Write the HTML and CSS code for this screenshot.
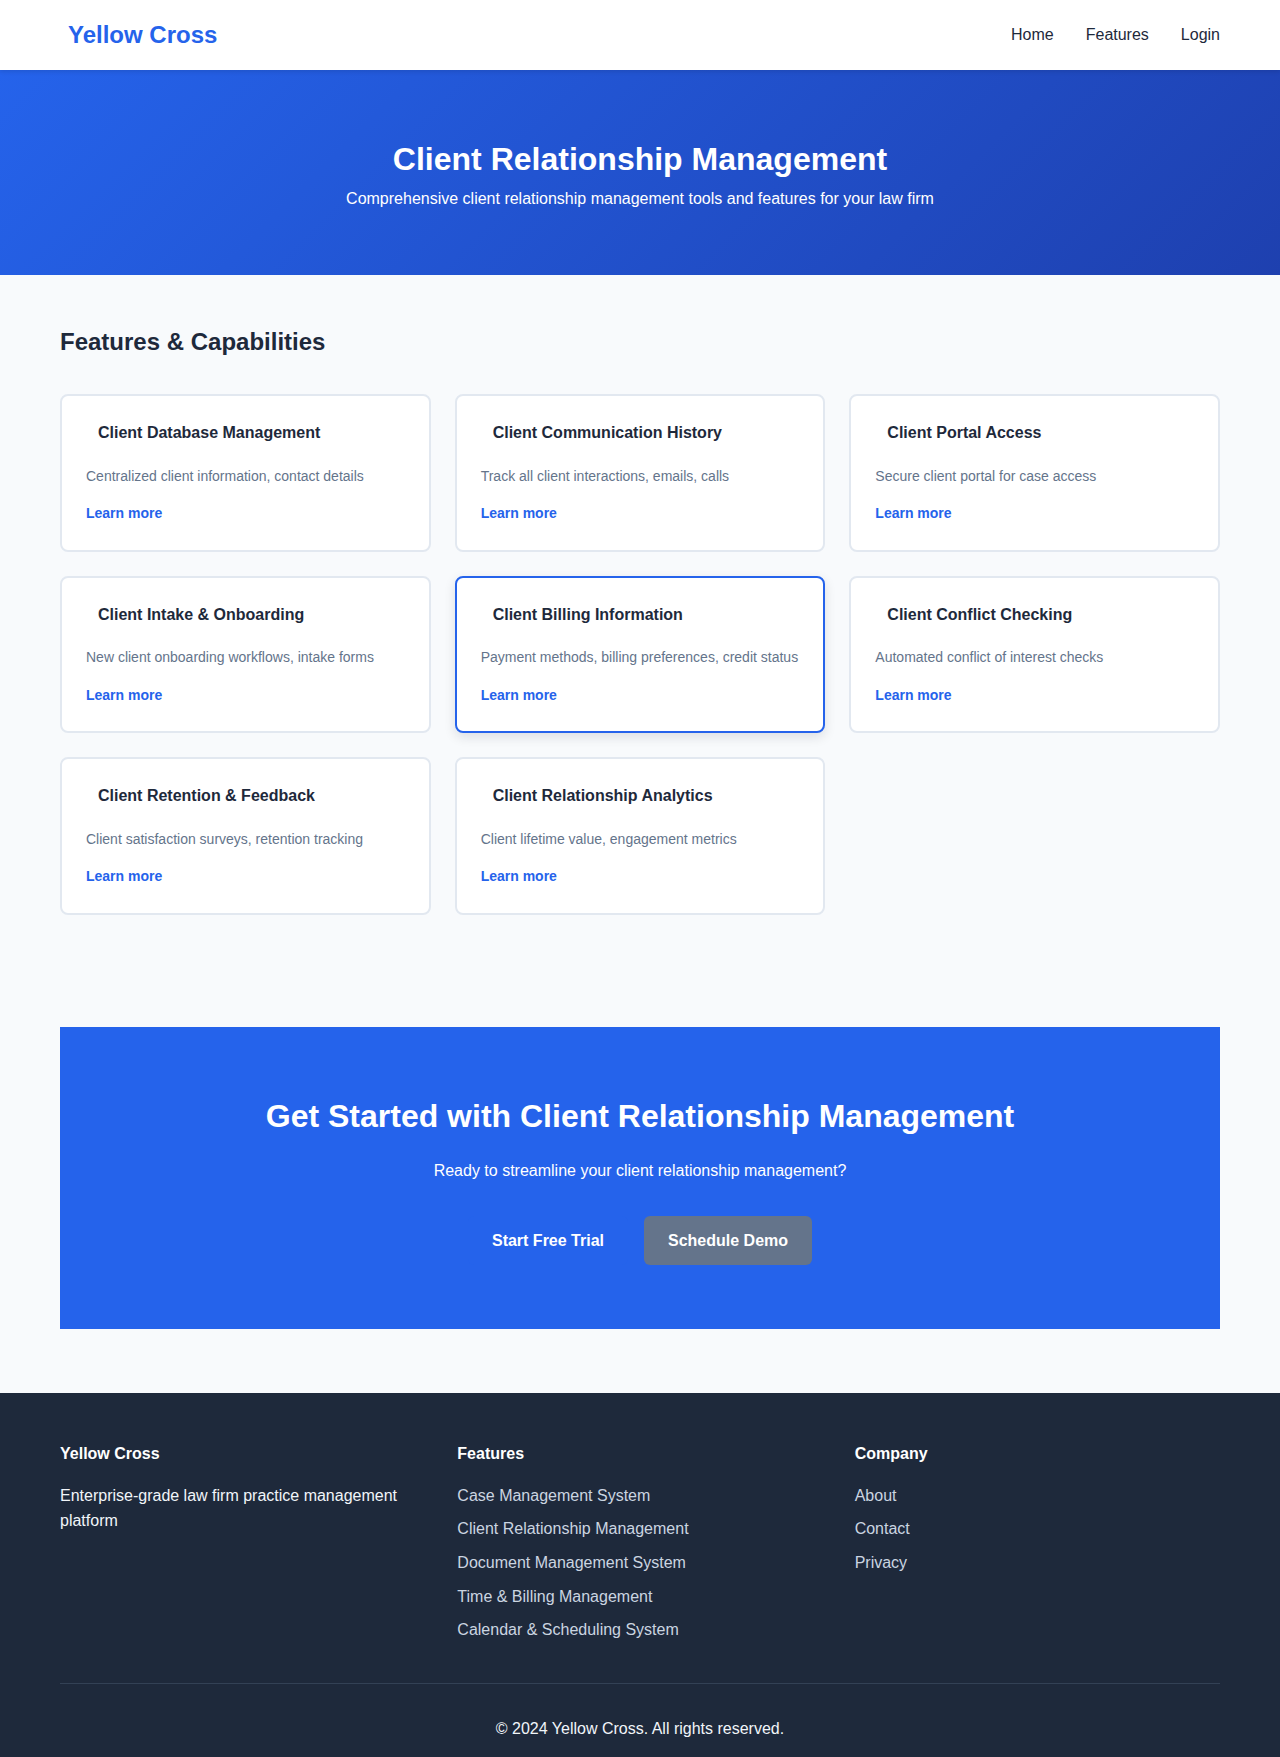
FILE: index.html
```html
<!DOCTYPE html>
<html lang="en">
<head>
<meta charset="utf-8">
<title>Client Relationship Management - Yellow Cross</title>
<link rel="stylesheet" href="styles.css">
</head>
<body>
<header class="navbar">
  <div class="nav-inner">
    <a class="logo" href="#">Yellow Cross</a>
    <nav class="nav-links">
      <a href="#">Home</a>
      <a href="#">Features</a>
      <a href="#">Login</a>
    </nav>
  </div>
</header>

<section class="hero">
  <h1>Client Relationship Management</h1>
  <p>Comprehensive client relationship management tools and features for your law firm</p>
</section>

<main class="features">
  <div class="container">
    <h2>Features &amp; Capabilities</h2>
    <div class="grid">
      <div class="card">
        <h3>Client Database Management</h3>
        <p class="desc">Centralized client information, contact details</p>
        <div class="more"><a href="#">Learn more</a></div>
      </div>
      <div class="card">
        <h3>Client Communication History</h3>
        <p class="desc">Track all client interactions, emails, calls</p>
        <div class="more"><a href="#">Learn more</a></div>
      </div>
      <div class="card">
        <h3>Client Portal Access</h3>
        <p class="desc">Secure client portal for case access</p>
        <div class="more"><a href="#">Learn more</a></div>
      </div>
      <div class="card">
        <h3>Client Intake &amp; Onboarding</h3>
        <p class="desc">New client onboarding workflows, intake forms</p>
        <div class="more"><a href="#">Learn more</a></div>
      </div>
      <div class="card active">
        <h3>Client Billing Information</h3>
        <p class="desc">Payment methods, billing preferences, credit status</p>
        <div class="more"><a href="#">Learn more</a></div>
      </div>
      <div class="card">
        <h3>Client Conflict Checking</h3>
        <p class="desc">Automated conflict of interest checks</p>
        <div class="more"><a href="#">Learn more</a></div>
      </div>
      <div class="card">
        <h3>Client Retention &amp; Feedback</h3>
        <p class="desc">Client satisfaction surveys, retention tracking</p>
        <div class="more"><a href="#">Learn more</a></div>
      </div>
      <div class="card">
        <h3>Client Relationship Analytics</h3>
        <p class="desc">Client lifetime value, engagement metrics</p>
        <div class="more"><a href="#">Learn more</a></div>
      </div>
    </div>
  </div>
</main>

<section class="cta">
  <h2>Get Started with Client Relationship Management</h2>
  <p>Ready to streamline your client relationship management?</p>
  <div class="cta-buttons">
    <a class="btn btn-primary" href="#">Start Free Trial</a>
    <a class="btn btn-secondary" href="#">Schedule Demo</a>
  </div>
</section>

<footer class="footer">
  <div class="container">
    <div class="footer-grid">
      <div class="footer-col">
        <h4>Yellow Cross</h4>
        <p>Enterprise-grade law firm practice management platform</p>
      </div>
      <div class="footer-col">
        <h4>Features</h4>
        <ul>
          <li><a href="#">Case Management System</a></li>
          <li><a href="#">Client Relationship Management</a></li>
          <li><a href="#">Document Management System</a></li>
          <li><a href="#">Time &amp; Billing Management</a></li>
          <li><a href="#">Calendar &amp; Scheduling System</a></li>
        </ul>
      </div>
      <div class="footer-col">
        <h4>Company</h4>
        <ul>
          <li><a href="#">About</a></li>
          <li><a href="#">Contact</a></li>
          <li><a href="#">Privacy</a></li>
        </ul>
      </div>
    </div>
    <div class="footer-bottom">
      <p>&copy; 2024 Yellow Cross. All rights reserved.</p>
    </div>
  </div>
</footer>
</body>
</html>
```

FILE: styles.css
```css
* {
  box-sizing: border-box;
}

body {
  margin: 0;
  font-family: "Liberation Sans", Arial, sans-serif;
  font-size: 16px;
  line-height: 1.6;
  color: #1e293b;
  background: #f8fafc;
}

a {
  text-decoration: none;
}

.container {
  max-width: 1160px;
  margin: 0 auto;
}

/* Navbar */
.navbar {
  background: #ffffff;
  box-shadow: 0 2px 4px rgba(0, 0, 0, 0.1);
  padding: 16px 0;
  position: relative;
  z-index: 2;
}

.nav-inner {
  max-width: 1160px;
  margin: 0 auto;
  display: flex;
  align-items: center;
  justify-content: space-between;
}

.logo {
  font-size: 24px;
  font-weight: 700;
  color: #2563eb;
  padding-left: 8px;
}

.nav-links {
  display: flex;
  gap: 32px;
}

.nav-links a {
  color: #1e293b;
  font-size: 16px;
}

/* Hero */
.hero {
  background: linear-gradient(135deg, #2563eb 0%, #1e40af 100%);
  color: #ffffff;
  text-align: center;
  padding: 64px 20px;
}

.hero h1 {
  margin: 0;
  font-size: 32px;
  line-height: 1.6;
  font-weight: 700;
}

.hero p {
  margin: 0;
  font-size: 16px;
}

/* Features */
.features {
  padding: 48px 0;
}

.features h2 {
  margin: 0 0 32.5px;
  font-size: 24px;
  line-height: 1.6;
  font-weight: 700;
  color: #1e293b;
}

.grid {
  display: grid;
  grid-template-columns: repeat(3, 1fr);
  gap: 24px;
}

.card {
  background: #ffffff;
  border: 2px solid #e2e8f0;
  border-radius: 8px;
  padding: 24px;
}

.card.active {
  border-color: #2563eb;
  box-shadow: 0 4px 12px rgba(15, 23, 42, 0.12);
}

.card h3 {
  margin: 0 0 19px;
  padding-left: 12px;
  font-size: 16px;
  line-height: 1.6;
  font-weight: 700;
  color: #1e293b;
}

.card .desc {
  margin: 0 0 13px;
  font-size: 14px;
  line-height: 1.6;
  color: #64748b;
}

.card .more a {
  font-size: 14px;
  font-weight: 700;
  color: #2563eb;
}

/* CTA */
.cta {
  max-width: 1160px;
  margin: 64px auto;
  background: #2563eb;
  color: #ffffff;
  text-align: center;
  padding: 64px 20px;
}

.cta h2 {
  margin: 0 0 16px;
  font-size: 32px;
  line-height: 1.6;
  font-weight: 700;
}

.cta p {
  margin: 0 0 32px;
  font-size: 16px;
}

.cta-buttons {
  display: flex;
  justify-content: center;
  gap: 16px;
}

.btn {
  display: inline-block;
  padding: 12px 24px;
  border-radius: 6px;
  font-size: 16px;
  font-weight: 700;
  line-height: 1.6;
  color: #ffffff;
}

.btn-primary {
  background: #2563eb;
}

.btn-secondary {
  background: #64748b;
}

/* Footer */
.footer {
  background: #1e293b;
  color: #f1f5f9;
  padding: 48px 0 16px;
}

.footer-grid {
  display: grid;
  grid-template-columns: repeat(3, 1fr);
  gap: 32px;
  margin-bottom: 32px;
}

.footer-col h4 {
  margin: 0 0 16px;
  font-size: 16px;
  font-weight: 700;
  color: #ffffff;
}

.footer-col p {
  margin: 0;
  color: #f1f5f9;
}

.footer-col ul {
  list-style: none;
  margin: 0;
  padding: 0;
}

.footer-col li {
  margin-bottom: 8px;
}

.footer-col li a {
  color: #cbd5e1;
}

.footer-bottom {
  border-top: 1px solid #334155;
  padding-top: 32px;
  text-align: center;
}

.footer-bottom p {
  margin: 0;
  color: #f1f5f9;
}
```
